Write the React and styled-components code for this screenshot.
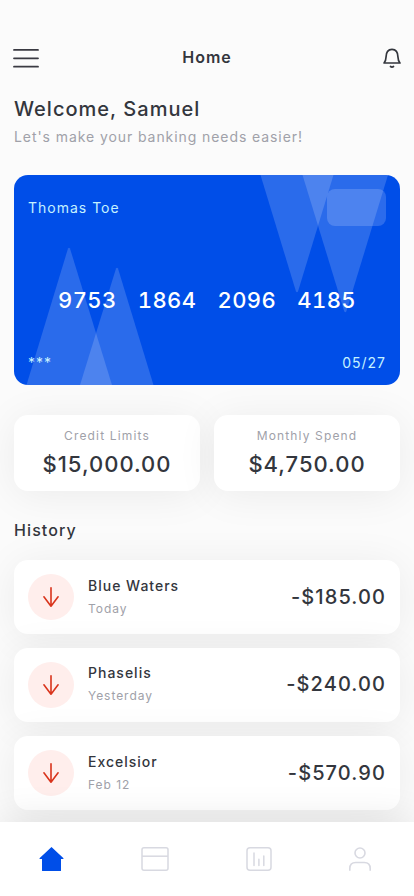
import styled, { createGlobalStyle } from "styled-components";

const GlobalStyle = createGlobalStyle`
  * {
    box-sizing: border-box;
  }
  body {
    margin: 0;
    background: #fbfbfb;
    font-family: Inter, "Liberation Sans", sans-serif;
    color: #33363d;
  }
  p, h1, h2, h3 {
    margin: 0;
    font-weight: 500;
  }
`;

const Screen = styled.div`
  height: 896px;
  overflow: hidden;
  display: flex;
  flex-direction: column;
`;

const Content = styled.main`
  height: 822px;
  flex-shrink: 0;
  padding: 0 14px;
`;

const Header = styled.header`
  height: 91px;
  padding-top: 24px;
  margin: 0 -2px 0 -2px;
  display: flex;
  align-items: center;
  justify-content: space-between;

  svg {
    display: block;
  }
`;

const PageName = styled.h1`
  padding: 0 8px 2px 0;
  font-size: 16px;
  line-height: 20px;
  font-weight: 600;
  letter-spacing: 1px;
`;

const Welcome = styled.section`
  height: 84px;
  padding-top: 5px;
`;

const Title = styled.h2`
  font-size: 20px;
  line-height: 26px;
  letter-spacing: 1.02px;
`;

const Subtitle = styled.p`
  margin-top: 5px;
  font-size: 14px;
  line-height: 20px;
  font-weight: 400;
  letter-spacing: 0.92px;
  color: #a0a1a9;
`;

const BankCard = styled.section`
  position: relative;
  height: 210px;
  padding: 14px;
  border-radius: 14px;
  overflow: hidden;
  background: #004ee8;
  color: #fff;
  display: flex;
  flex-direction: column;
  justify-content: space-between;
`;

const Pattern = styled.svg`
  position: absolute;
  top: 0;
  left: 0;
`;

const CardRow = styled.div`
  display: flex;
  justify-content: space-between;
  align-items: center;
  color: #c5f2ff;
  font-size: 14px;
  line-height: 16px;
  letter-spacing: 1px;
`;

const Chip = styled.div`
  width: 59px;
  height: 37px;
  border-radius: 8px;
  background: rgba(255, 255, 255, 0.17);
`;

const Digits = styled.div`
  display: flex;
  justify-content: space-between;
  padding: 18px 30px 0 30px;
  font-size: 22px;
  line-height: 28px;
  font-weight: 500;
  letter-spacing: 0.4px;
  font-variant-numeric: tabular-nums;
`;

const Stats = styled.section`
  display: flex;
  gap: 14px;
  margin-top: 30px;
`;

const Stat = styled.div`
  flex: 1;
  height: 76px;
  padding-top: 12px;
  border-radius: 14px;
  background: #fff;
  box-shadow: 0 4px 42px rgba(0, 0, 0, 0.065);
  text-align: center;
`;

const StatLabel = styled.p`
  font-size: 12px;
  line-height: 18px;
  font-weight: 400;
  letter-spacing: 1.15px;
  color: #a0a1a9;
`;

const StatValue = styled.p`
  margin-top: 5px;
  font-size: 22px;
  line-height: 28px;
  letter-spacing: 1px;
`;

const HistoryTitle = styled.h2`
  height: 69px;
  padding-top: 29px;
  font-size: 16px;
  line-height: 20px;
  letter-spacing: 1.1px;
`;

const List = styled.section`
  display: flex;
  flex-direction: column;
  gap: 14px;
`;

const Row = styled.div`
  height: 74px;
  padding: 0 14px;
  border-radius: 14px;
  background: #fff;
  box-shadow: 0 4px 42px rgba(0, 0, 0, 0.065);
  display: flex;
  align-items: center;
`;

const ArrowCircle = styled.div`
  width: 46px;
  height: 46px;
  border-radius: 50%;
  background: #ffeeec;
  display: flex;
  align-items: center;
  justify-content: center;
`;

const RowBody = styled.div`
  flex: 1;
  margin-left: 14px;
  padding-bottom: ${(props) => (props.$raised ? "2px" : "0")};
  display: flex;
  align-items: center;
  justify-content: space-between;
`;

const RowName = styled.h3`
  font-size: 14px;
  line-height: 20px;
  letter-spacing: 1px;
`;

const RowDate = styled.p`
  margin-top: 4px;
  font-size: 12px;
  line-height: 18px;
  font-weight: 400;
  letter-spacing: 0.95px;
  color: #a0a1a9;
`;

const Amount = styled.p`
  font-size: 20px;
  line-height: 26px;
  letter-spacing: 1.1px;
`;

const TabBar = styled.nav`
  position: relative;
  height: 74px;
  flex-shrink: 0;
  padding: 0 40px 0 37px;
  background: #fff;
  box-shadow: 0 0 40px rgba(0, 0, 0, 0.11);
  display: flex;
  align-items: center;
  justify-content: space-between;
`;

const history = [
  { name: "Blue Waters", date: "Today", amount: "-$185.00" },
  { name: "Phaselis", date: "Yesterday", amount: "-$240.00" },
  { name: "Excelsior", date: "Feb 12", amount: "-$570.90" },
];

function MenuIcon() {
  return (
    <svg width="28" height="22" fill="none" stroke="#3a3a42" strokeWidth="1.8" strokeLinecap="round">
      <path d="M2 2.900h24M2 11.300h24M2 19.700h24" />
    </svg>
  );
}

function BellIcon() {
  return (
    <svg width="20" height="22" fill="none" stroke="#33363d" strokeWidth="1.7" strokeLinecap="round" strokeLinejoin="round">
      <path d="M2 16h16c-1.300-1.300-1.900-3-2-5.800C15.900 5.200 14 2.400 10 2.400S4.100 5.200 4 10.200c-.1 2.800-.7 4.500-2 5.800z" />
      <path d="M8.500 19.500q1.500 1.200 3 0" />
    </svg>
  );
}

function ArrowDown() {
  return (
    <svg width="18" height="22" fill="none" stroke="#d9341c" strokeWidth="1.6" strokeLinecap="round" strokeLinejoin="round">
      <path d="M9 1.700v18.500M1.900 10.800 9 20.200l7.100-9.400" />
    </svg>
  );
}

export default function App() {
  return (
    <Screen>
      <GlobalStyle />
      <Content>
        <Header>
          <MenuIcon />
          <PageName>Home</PageName>
          <BellIcon />
        </Header>

        <Welcome>
          <Title>Welcome, Samuel</Title>
          <Subtitle>Let's make your banking needs easier!</Subtitle>
        </Welcome>

        <BankCard>
          <Pattern width="386" height="210" fill="#fff" fillOpacity="0.165">
            <path d="M246.500 0h73l-35.500 116.500q-1 1.500-2 0z" />
            <path d="M288.500 0h85.500l-41.700 136.500q-1 1.500-2 0z" />
            <path d="M12.500 210h85.500L56 73.500q-1-1.500-2 0z" />
            <path d="M66 210h73.500L104 93.500q-1-1.500-2 0z" />
          </Pattern>
          <CardRow>
            <span>Thomas Toe</span>
            <Chip />
          </CardRow>
          <Digits>
            <span>9753</span>
            <span>1864</span>
            <span>2096</span>
            <span>4185</span>
          </Digits>
          <CardRow>
            <span>***</span>
            <span>05/27</span>
          </CardRow>
        </BankCard>

        <Stats>
          <Stat>
            <StatLabel>Credit Limits</StatLabel>
            <StatValue>$15,000.00</StatValue>
          </Stat>
          <Stat>
            <StatLabel>Monthly Spend</StatLabel>
            <StatValue>$4,750.00</StatValue>
          </Stat>
        </Stats>

        <HistoryTitle>History</HistoryTitle>
        <List>
          {history.map((item, index) => (
            <Row key={item.name}>
              <ArrowCircle>
                <ArrowDown />
              </ArrowCircle>
              <RowBody $raised={index === 1}>
                <div>
                  <RowName>{item.name}</RowName>
                  <RowDate>{item.date}</RowDate>
                </div>
                <Amount>{item.amount}</Amount>
              </RowBody>
            </Row>
          ))}
        </List>
      </Content>

      <TabBar>
        <svg width="28" height="28" fill="#004ee8">
          <path d="M14.500 2 26.500 13.300q.3.700-.5.700h-2v11.500q0 .5-.5.500h-18q-.5 0-.5-.5V14H3q-.8 0-.5-.7z" />
        </svg>
        <svg width="30" height="28" fill="none" stroke="#d8d9e1" strokeWidth="1.5">
          <rect x="3" y="2.800" width="26" height="22.500" rx="2" />
          <path d="M3 11.200h26" />
        </svg>
        <svg width="28" height="28" fill="none" stroke="#d8d9e1" strokeWidth="1.5" strokeLinecap="round">
          <rect x="3" y="2.800" width="24" height="22.500" rx="3" />
          <path d="M10 8v12.500M14.900 14.200v6.300M19.800 11v9.500" />
        </svg>
        <svg width="28" height="28" fill="none" stroke="#d8d9e1" strokeWidth="1.600">
          <circle cx="14" cy="8" r="5" />
          <path d="M3.800 25.800v-2.300q0-6 6-6h8.400q6 0 6 6v2.300" />
        </svg>
      </TabBar>
    </Screen>
  );
}
